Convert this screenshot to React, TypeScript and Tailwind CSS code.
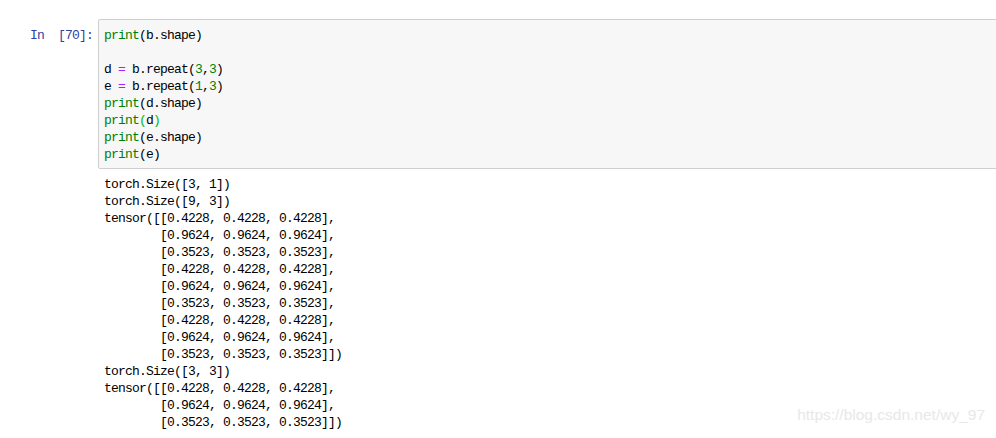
const mono = "font-['Liberation_Mono','DejaVu_Sans_Mono',monospace] text-[13px] tracking-[-0.8px] leading-[17px] whitespace-pre";

const G = ({ children }: { children: React.ReactNode }) => <span className="text-[#008000]">{children}</span>;
const P = ({ children }: { children: React.ReactNode }) => <span className="text-[#aa22ff]">{children}</span>;

const output = `torch.Size([3, 1])
torch.Size([9, 3])
tensor([[0.4228, 0.4228, 0.4228],
        [0.9624, 0.9624, 0.9624],
        [0.3523, 0.3523, 0.3523],
        [0.4228, 0.4228, 0.4228],
        [0.9624, 0.9624, 0.9624],
        [0.3523, 0.3523, 0.3523],
        [0.4228, 0.4228, 0.4228],
        [0.9624, 0.9624, 0.9624],
        [0.3523, 0.3523, 0.3523]])
torch.Size([3, 3])
tensor([[0.4228, 0.4228, 0.4228],
        [0.9624, 0.9624, 0.9624],
        [0.3523, 0.3523, 0.3523]])`;

export default function App() {
  return (
    <div className="relative w-[996px] h-[438px] bg-white overflow-hidden">
      <div className="flex pt-[19px]">
        <div className={`${mono} w-[98px] pt-[8px] pr-[5px] text-right text-[#303f9f]`}>{"In  [70]:"}</div>
        <div className={`${mono} flex-1 -mr-[10px] bg-[#f7f7f7] border border-[#cfcfcf] rounded-[2px] pl-[5px] pt-[7px] pb-[5px] text-black`}>
          <div><G>print</G>(b.shape)</div>
          <div>{" "}</div>
          <div>d <P>=</P> b.repeat(<G>3</G>,<G>3</G>)</div>
          <div>e <P>=</P> b.repeat(<G>1</G>,<G>3</G>)</div>
          <div><G>print</G>(d.shape)</div>
          <div><G>print</G><span className="text-[#00bb00]">(</span>d<span className="text-[#00bb00]">)</span></div>
          <div><G>print</G>(e.shape)</div>
          <div><G>print</G>(e)</div>
        </div>
      </div>
      <div className={`${mono} pl-[104px] pt-[7px] text-black`}>{output}</div>
      <div className="absolute right-[11px] top-[403px] font-['Liberation_Sans',Arial,sans-serif] text-[15.5px] text-[#e8e8e8]">
        https://blog.csdn.net/wy_97
      </div>
    </div>
  );
}
